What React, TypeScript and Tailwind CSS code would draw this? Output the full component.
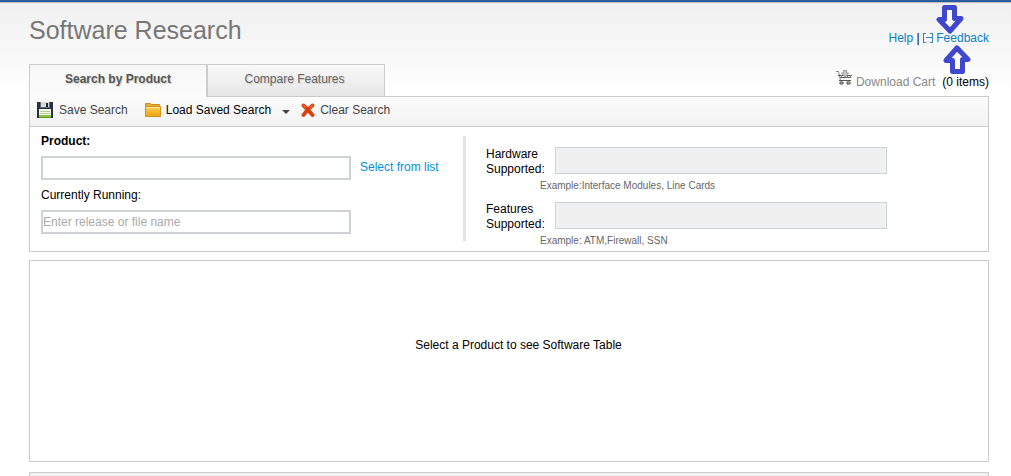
import React from 'react';

function SaveIcon() {
  return (
    <svg width="16" height="16" viewBox="0 0 16 16" shapeRendering="crispEdges" aria-hidden="true">
      <path d="M0 0h15l1 1v15H0z" fill="#273240" />
      <rect x="3" width="10" height="6" fill="#5f6a75" />
      <rect x="4" width="8" height="5" fill="#d4d9dc" />
      <rect x="9" y="1" width="2" height="4" fill="#1d2530" />
      <rect x="2" y="7" width="12" height="8" fill="#f4f6ee" />
      <path d="M3 9h10v1H3zM3 11h10v1H3z" fill="#b9cf8e" />
      <rect x="2" y="13" width="12" height="2" fill="#8cc63f" />
      <rect x="2" y="15" width="12" height="1" fill="#5f9a1e" />
    </svg>
  );
}

function FolderIcon() {
  return (
    <svg width="16" height="16" viewBox="0 0 16 16" aria-hidden="true">
      <defs>
        <linearGradient id="folder" x1="0" y1="0" x2="0" y2="1">
          <stop offset="0" stopColor="#ffd257" />
          <stop offset="1" stopColor="#eda211" />
        </linearGradient>
      </defs>
      <path d="M.5 5V1.500h5l1 1h8V5z" fill="#e8ac38" stroke="#c98a1c" />
      <path d="M.5 4.500h15v10H.5z" fill="url(#folder)" stroke="#d6921a" />
      <path d="M1 5.500h14" stroke="#ffe596" />
    </svg>
  );
}

function ClearIcon() {
  return (
    <svg width="14" height="14" viewBox="0 0 14 14" aria-hidden="true">
      <path d="M2.500 2.500Q6 5.500 11.500 12M11.500 2.500Q6 6.500 2.500 12" fill="none" stroke="#d9400f" strokeWidth="3.800" strokeLinecap="round" />
      <path d="M2.500 2.500 5 4.500M11.500 2.500 9 4.500" stroke="#ec6a43" strokeWidth="1.200" strokeLinecap="round" />
    </svg>
  );
}

function CartIcon() {
  return (
    <svg width="16" height="16" viewBox="0 0 16 16" aria-hidden="true">
      <path d="M0 1.500h2.500L4.500 10.500" fill="none" stroke="#888" />
      <path d="M2 5.500h14M4 7.500h11M3 10.500h12" stroke="#555" />
      <path d="M5.500 5v3M8.500 5v3M11.500 5v3M14.500 5v3" stroke="#777" />
      <path d="M7.500.5h3V3h2L9 7 5.500 3h2z" fill="#c8c8c8" stroke="#999" />
      <path d="M4 12h3v2H4zM11 12h3v2h-3z" fill="#eee" stroke="#444" />
    </svg>
  );
}

function FeedbackIcon() {
  return (
    <svg width="10" height="10" viewBox="0 0 10 10" className="inline-block align-[-1px]" shapeRendering="crispEdges" aria-hidden="true">
      <path d="M3 .5H.5v9H3M7 .5h2.500v9H7M3 4.500h6" fill="none" stroke="#3a83ac" />
    </svg>
  );
}

function Arrow({ className }: { className: string }) {
  return (
    <svg width="28" height="29" viewBox="0 0 28 29" className={className} aria-hidden="true">
      <path d="M8.500 2.500h10v11h6.500L14 26 3 14.500h5.500z" fill="#fff" stroke="#3f48cc" strokeWidth="5" strokeLinejoin="round" />
    </svg>
  );
}

interface SupportedFieldProps {
  id: string;
  name: string;
  example: string;
}

function SupportedField({ id, name, example }: SupportedFieldProps) {
  return (
    <div className="h-[55px]">
      <div className="flex">
        <label htmlFor={id} className="w-[69px] leading-[15px]">
          {name}
          <br />
          Supported:
        </label>
        <input id={id} disabled className="h-[27px] w-full max-w-[332px] border border-[#cdd2d6] bg-[#f0f0f0] px-1" />
      </div>
      <p className="ml-[54px] pt-[3px] text-[10px] leading-[12px] text-[#666]">{example}</p>
    </div>
  );
}

export default function App() {
  return (
    <div className="overflow-hidden border-t-2 border-[#2b5da3] bg-white bg-linear-to-b from-[#f0f0f0] to-white to-[90px] font-['Liberation_Sans',Arial,sans-serif] text-[12px] text-black">
      <div className="border-t border-[#bbb] pr-[22px] pl-[29px]">
        <header className="flex justify-between">
          <h1 className="pt-[11px] text-[25px] leading-[32px] text-[#777]">Software Research</h1>
          <nav className="relative pt-[27px] leading-[16px]">
            <a href="#help" className="text-[#0d7fc0]">Help</a>
            {' | '}
            <a href="#feedback" className="text-[#0d7fc0]">
              <FeedbackIcon /> Feedback
            </a>
            <Arrow className="absolute top-[2px] right-[25px]" />
            <Arrow className="absolute top-[42px] right-[18px] rotate-180" />
          </nav>
        </header>

        <div className="mt-[18px] flex items-start justify-between">
          <div role="tablist" className="relative z-10 flex h-[33px]">
            <button role="tab" aria-selected="true" className="w-[178px] border border-b-0 border-[#ccc] bg-linear-to-b from-[#f7f7f7] to-[#fcfcfc] pb-[4px] font-bold text-[#555] text-shadow-[1px_1px_1px_#ccc]">
              Search by Product
            </button>
            <button role="tab" aria-selected="false" className="w-[178px] border border-[#ccc] bg-linear-to-b from-[#f9f9f9] to-[#e6e6e6] pr-[3px] pb-[3px] text-[#666] text-shadow-[1px_1px_1px_#ccc]">
              Compare Features
            </button>
          </div>
          <div className="flex pt-[6px] leading-[24px]">
            <CartIcon />
            <a href="#cart" className="mr-[7px] ml-1 text-[#888]">Download Cart</a>
            <span>(0 items)</span>
          </div>
        </div>

        <main className="-mt-px">
          <form className="border border-[#ccc] bg-white">
            <div className="flex h-[30px] items-center border-b border-[#ccc] bg-linear-to-b from-[#fcfcfc] to-[#f2f2f2] pb-[3px] pl-[7px] text-[#444]">
              <button type="button" className="flex items-center gap-[6px]">
                <SaveIcon />
                Save Search
              </button>
              <button type="button" className="ml-[17px] flex items-center gap-[5px] text-black">
                <FolderIcon />
                Load Saved Search
                <svg width="8" height="4" viewBox="0 0 8 4" className="mt-[3px] ml-[6px]" aria-hidden="true">
                  <path d="M0 0h8L4 4z" fill="#444" />
                </svg>
              </button>
              <button type="button" className="ml-[11px] flex items-center gap-[5px]">
                <ClearIcon />
                Clear Search
              </button>
            </div>

            <div className="flex h-[124px] pl-[11px]">
              <div className="w-[422px] pt-[6px]">
                <label htmlFor="product" className="block leading-[16px] font-bold">Product:</label>
                <div className="mt-[7px] flex gap-[9px]">
                  <input id="product" className="h-[24px] w-[310px] border-2 border-[#cdd2d6] bg-white" />
                  <a href="#list" className="leading-[22px] text-[#0090d8]">Select from list</a>
                </div>
                <label htmlFor="release" className="mt-[7px] block leading-[16px]">Currently Running:</label>
                <input
                  id="release"
                  placeholder="Enter release or file name"
                  className="mt-[7px] block h-[24px] w-[310px] border-2 border-[#cdd2d6] bg-white placeholder:text-[#aaa]"
                />
              </div>
              <div className="mt-[9px] h-[105px] w-[3px] bg-[#e2e2e2]" />
              <div className="flex-1 pt-[20px] pl-[20px]">
                <SupportedField id="hardware" name="Hardware" example="Example:Interface Modules, Line Cards" />
                <SupportedField id="features" name="Features" example="Example: ATM,Firewall, SSN" />
              </div>
            </div>
          </form>

          <section className="mt-2 border border-[#ccc] bg-white pt-[76px] pb-[108px] pl-[19px] text-center leading-[16px]">
            Select a Product to see Software Table
          </section>
          <section className="mt-[10px] h-[4px] border border-b-0 border-[#ccc] bg-[#f2f2f2]" />
        </main>
      </div>
    </div>
  );
}
